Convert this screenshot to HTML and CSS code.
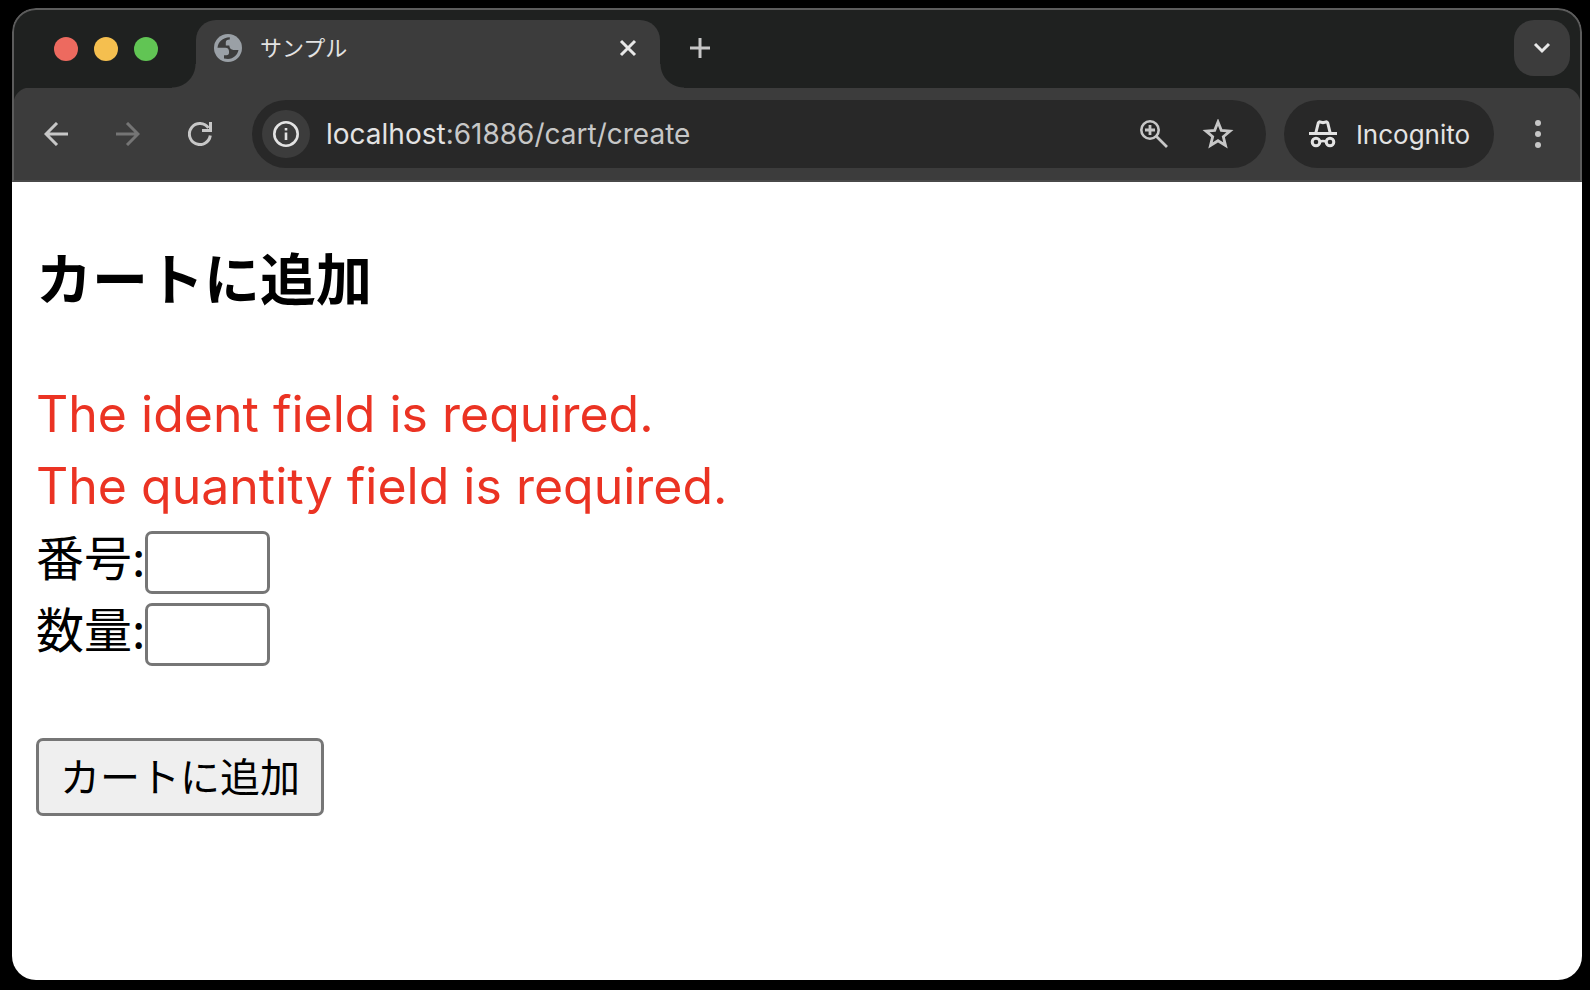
FILE: index.html
```html
<!DOCTYPE html>
<html lang="ja">
<head>
<meta charset="utf-8">
<title>サンプル</title>
<link rel="stylesheet" href="styles.css">
</head>
<body>
<div class="window">
  <header class="tabstrip">
    <div class="lights"><span class="light red"></span><span class="light yellow"></span><span class="light green"></span></div>
    <div class="tab">
      <svg class="favicon" viewBox="0 0 28 28"><circle cx="14" cy="14" r="14" fill="#9aa0a6"/><path fill="#3c3c3c" d="M3.500 13.800C4 8 8.500 3.500 15.800 3.300V5.500C13 5.500 11.800 6.500 11.800 8.500V11.600H15.300C15.600 14.500 17 16 19.500 16H24.500C23.500 21 19.500 24.700 14 24.900L10 24.400V21.300H12.500C14.200 21.300 15 20.300 15 18.800V17.500C15 15.300 13.800 13.800 11.500 13.800z"/></svg>
      <span class="tab-title">サンプル</span>
      <button class="plain" aria-label="閉じる"><svg width="18" height="18" viewBox="0 0 18 18"><path d="M2 2l14 14M16 2L2 16" stroke="#e8e8e8" stroke-width="3"/></svg></button>
    </div>
    <button class="plain new-tab" aria-label="新しいタブ"><svg width="20" height="20" viewBox="0 0 20 20"><path d="M10 0v20M0 10h20" stroke="#c7c7c7" stroke-width="3"/></svg></button>
    <button class="plain search-tabs" aria-label="タブを検索"><svg width="18" height="12" viewBox="0 0 18 12"><path d="M2 2l7 7 7-7" fill="none" stroke="#e8e8e8" stroke-width="3"/></svg></button>
  </header>
  <nav class="toolbar">
    <button class="plain" aria-label="戻る"><svg width="24" height="24" viewBox="0 0 24 24"><path d="M24 12H2M13 1L2 12l11 11" fill="none" stroke="#c7c7c7" stroke-width="3"/></svg></button>
    <button class="plain" aria-label="進む"><svg width="24" height="24" viewBox="0 0 24 24"><path d="M0 12h22M11 1l11 11-11 11" fill="none" stroke="#757575" stroke-width="3"/></svg></button>
    <button class="plain" aria-label="再読み込み"><svg width="24" height="24" viewBox="0 0 24 24"><path d="M22.300 13.500A10.500 10.500 0 1 1 20.500 6M22.500 0v8.500H14" fill="none" stroke="#c7c7c7" stroke-width="3"/></svg></button>
    <div class="address">
      <span class="info"><svg width="26" height="26" viewBox="0 0 26 26"><circle cx="13" cy="13" r="11.700" fill="none" stroke="#e3e3e3" stroke-width="2.600"/><path d="M13 11.500V19M13 7v2.600" stroke="#e3e3e3" stroke-width="2.600"/></svg></span>
      <span class="url"><span class="host">localhost</span>:61886/cart/create</span>
      <button class="plain" aria-label="ズーム"><svg width="28" height="28" viewBox="0 0 28 28"><path d="M16.500 16.500L27 27M10 5v10M5 10h10" stroke="#c7c7c7" stroke-width="2.800"/><circle cx="10" cy="10" r="8.700" fill="none" stroke="#c7c7c7" stroke-width="2.600"/></svg></button>
      <button class="plain" aria-label="ブックマーク"><svg width="32" height="30" viewBox="0 0 32 30"><path d="M16 3l3.300 8.300 8.700.7-6.700 5.700 2.200 8.800-7.500-4.800-7.500 4.800 2.200-8.800L4 12l8.700-.7z" fill="none" stroke="#c7c7c7" stroke-width="2.800"/></svg></button>
    </div>
    <button class="plain incognito"><svg width="30" height="28" viewBox="0 0 30 28" fill="none" stroke="#e3e3e3"><path d="M1 13.500h28" stroke-width="3"/><path d="M7.800 13L10.300 3q.5-1.500 2-1l2.700.8 2.700-.8q1.500-.5 2 1L22.200 13" stroke-width="3"/><circle cx="8" cy="22" r="3.800" stroke-width="3"/><circle cx="22" cy="22" r="3.800" stroke-width="3"/><path d="M11.500 21.800q3.500-1.500 7 0" stroke-width="2.600"/></svg>Incognito</button>
    <button class="plain menu" aria-label="メニュー"><svg width="6" height="28" viewBox="0 0 6 28" fill="#c7c7c7"><circle cx="3" cy="3" r="3"/><circle cx="3" cy="14" r="3"/><circle cx="3" cy="25" r="3"/></svg></button>
  </nav>
  <main class="page">
    <h2 class="heading">カートに追加</h2>
    <div class="error">The ident field is required.</div>
    <div class="error">The quantity field is required.</div>
    <form class="form">
      <div class="row"><label for="ident">番号:</label><input class="field" id="ident" type="text"></div>
      <div class="row"><label for="quantity">数量:</label><input class="field" id="quantity" type="text"></div>
      <button class="submit" type="button">カートに追加</button>
    </form>
  </main>
</div>
</body>
</html>
```
FILE: styles.css
```css
* { box-sizing: border-box; }
body {
  margin: 0;
  background: #000;
  font-family: "Noto Sans CJK JP", sans-serif;
}
svg { display: block; }
.plain {
  display: flex;
  align-items: center;
  justify-content: center;
  flex: none;
  padding: 0;
  border: 0;
  background: none;
  color: inherit;
}
.window {
  display: flex;
  flex-direction: column;
  min-height: calc(100vh - 18px);
  margin: 8px 8px 10px 12px;
  border-radius: 24px;
  overflow: hidden;
}
.tabstrip {
  display: flex;
  align-items: flex-start;
  height: 80px;
  padding: 10px 10px 0 40px;
  border: 2px solid #5c5c5c;
  border-bottom: 0;
  border-radius: 24px 24px 0 0;
  background: #1f2120;
}
.lights {
  display: flex;
  gap: 16px;
  margin-top: 17px;
}
.light {
  width: 24px;
  height: 24px;
  border-radius: 50%;
}
.red { background: #ed6a5f; }
.yellow { background: #f5bf4f; }
.green { background: #61c554; }
.tab {
  position: relative;
  display: flex;
  align-items: center;
  flex: 0 1 464px;
  height: 68px;
  margin-left: 38px;
  padding: 0 23px 12px 18px;
  border-radius: 20px 20px 0 0;
  background: #3c3c3c;
}
.tab::before, .tab::after {
  content: "";
  position: absolute;
  bottom: 0;
  width: 24px;
  height: 24px;
}
.tab::before {
  right: 100%;
  background: radial-gradient(circle at 0 0, transparent 23px, #3c3c3c 24px);
}
.tab::after {
  left: 100%;
  background: radial-gradient(circle at 100% 0, transparent 23px, #3c3c3c 24px);
}
.favicon {
  width: 28px;
  height: 28px;
}
.tab-title {
  flex: 1;
  margin-left: 18px;
  padding-bottom: 4px;
  color: #e3e3e3;
  font-size: 22px;
  line-height: 32px;
}
.new-tab { margin: 18px 0 0 30px; }
.search-tabs {
  width: 56px;
  height: 56px;
  margin-left: auto;
  border-radius: 20px;
  background: #3c3c3c;
}
.toolbar {
  display: flex;
  align-items: center;
  height: 94px;
  padding: 0 39px 0 30px;
  gap: 48px;
  border: 2px solid #5c5c5c;
  border-top: 0;
  border-bottom-color: #484848;
  background: radial-gradient(circle at 16px 16px, #3c3c3c 16px, #1f2120 17px) 0 0 / 16px 16px no-repeat,
    radial-gradient(circle at 0 16px, #3c3c3c 16px, #1f2120 17px) 100% 0 / 16px 16px no-repeat,
    #3c3c3c;
  font-family: Inter, sans-serif;
}
.address {
  display: flex;
  align-items: center;
  flex: 1;
  height: 68px;
  margin-left: -8px;
  padding: 0 32px 0 10px;
  gap: 34px;
  border-radius: 34px;
  background: #282828;
}
.info {
  display: grid;
  place-items: center;
  width: 48px;
  height: 48px;
  border-radius: 50%;
  background: #3c3c3c;
}
.url {
  flex: 1;
  margin-left: -18px;
  color: #c7c7c7;
  font-size: 28px;
}
.host { color: #e3e3e3; }
.incognito {
  width: 210px;
  height: 68px;
  margin-left: -30px;
  gap: 18px;
  border-radius: 34px;
  background: #282828;
  color: #e3e3e3;
  font: 26px Inter, sans-serif;
}
.menu { margin-left: -7px; }
.page {
  flex: 1;
  padding: 56px 24px;
  background: #fff;
  font-size: 48px;
  line-height: 72px;
}
.heading {
  margin: 0 0 64px;
  font-size: 56px;
  line-height: 76px;
}
.error {
  color: #eb3323;
  font-family: Inter, sans-serif;
  font-size: 50px;
}
.form { margin-top: 2px; }
.row {
  display: flex;
  height: 72px;
  line-height: 62px;
}
.field {
  width: 125px;
  height: 63px;
  margin-top: 7px;
  padding: 3px 6px;
  border: 3px solid #767676;
  border-radius: 7px;
  background: #fff;
  font: inherit;
  font-size: 40px;
}
.submit {
  height: 78px;
  margin-top: 70px;
  padding: 0 21px 4px;
  border: 3px solid #767676;
  border-radius: 7px;
  background: #efefef;
  color: #000;
  font: inherit;
  font-size: 40px;
  line-height: 60px;
}
```
